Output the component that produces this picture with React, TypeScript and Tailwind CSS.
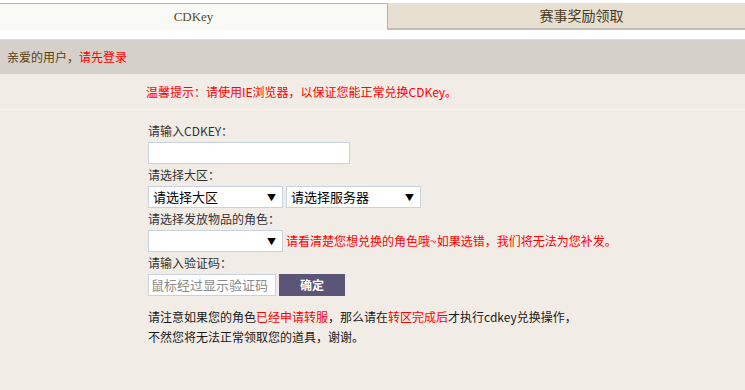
import React from "react";

const Select = ({ w, text }: { w: string; text?: string }) => (
  <div className={`${w} h-[22px] bg-white border border-[#c9d2df] flex items-center justify-between pl-[4px] pr-[6px] text-[13px] text-black`}>
    <span>{text ?? ""}</span>
    <span className="text-[9px] leading-none">▼</span>
  </div>
);

export default function App() {
  return (
    <div className="w-[745px] h-[390px] bg-[#f1ece6] font-['Noto_Sans_CJK_SC','Noto_Sans',sans-serif] text-[12px] overflow-hidden">
      <div className="bg-white pt-[3px] h-[39px]">
        <div className="flex h-[27px]">
          <div className="w-[388px] bg-[#f9f9f6] border-t border-r border-[#b9b6ae] flex items-center justify-center text-[13px] text-[#5a4a2a] font-['Liberation_Serif',serif]">
            CDKey
          </div>
          <div className="flex-1 bg-[#e6dfd2] border-b-2 border-[#c4beb4] flex items-center justify-center pl-[30px] text-[14px] text-[#4a3a1e]">
            赛事奖励领取
          </div>
        </div>
      </div>
      <div className="h-[35px] bg-[#d5d0c9] border-t border-[#e2ded8] flex items-center pl-[7px] text-[#5a3e12]">
        亲爱的用户，<span className="text-[#ff0000]">请先登录</span>
      </div>
      <div className="h-[36px] border-b border-[#f6f3ef] flex items-center pl-[146px] text-[#ff0000]">
        温馨提示：请使用IE浏览器，以保证您能正常兑换CDKey。
      </div>
      <div className="pl-[148px] pt-[10px] text-[#333]">
        <div className="h-[22px] flex items-center">请输入CDKEY：</div>
        <div className="w-[202px] h-[22px] bg-white border border-[#c9d2df]" />
        <div className="h-[22px] flex items-center">请选择大区：</div>
        <div className="flex gap-[3px]">
          <Select w="w-[135px]" text="请选择大区" />
          <Select w="w-[135px]" text="请选择服务器" />
        </div>
        <div className="h-[22px] flex items-center">请选择发放物品的角色：</div>
        <div className="flex items-center gap-[3px]">
          <Select w="w-[135px]" />
          <span className="text-[#ff0000]">请看清楚您想兑换的角色哦~如果选错，我们将无法为您补发。</span>
        </div>
        <div className="h-[22px] flex items-center">请输入验证码：</div>
        <div className="flex gap-[3px]">
          <div className="w-[128px] h-[22px] bg-white border border-[#c9d2df] flex items-center pl-[2px] text-[13px] text-[#8a8a8a]">
            鼠标经过显示验证码
          </div>
          <div className="w-[66px] h-[22px] bg-[#5b5577] text-white font-bold flex items-center justify-center">
            确定
          </div>
        </div>
        <div className="mt-[11px] leading-[20px] text-[#1a1a1a]">
          <div>
            请注意如果您的角色<span className="text-[#ff0000]">已经申请转服</span>，那么请在<span className="text-[#ff0000]">转区完成后</span>才执行cdkey兑换操作，
          </div>
          <div>不然您将无法正常领取您的道具，谢谢。</div>
        </div>
      </div>
    </div>
  );
}
